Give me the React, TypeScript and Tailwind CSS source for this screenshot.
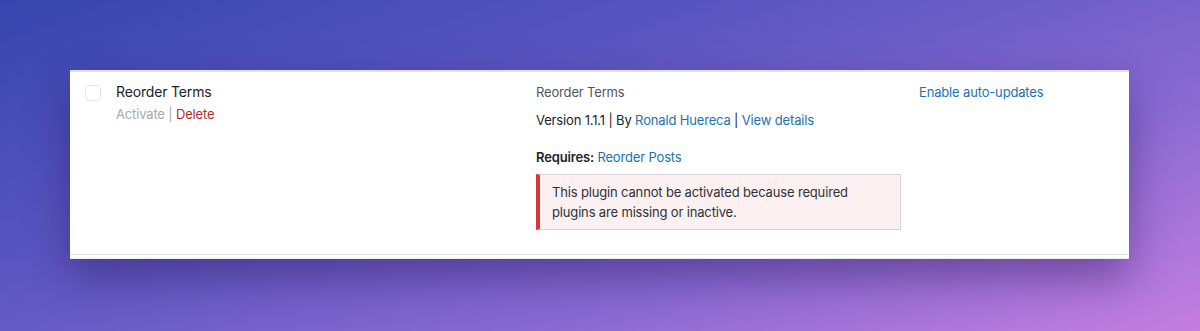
import React from "react";

export default function App() {
  return (
    <div
      className="w-[1200px] h-[331px] overflow-hidden relative bg-[linear-gradient(160deg,#3746ae_0%,#5a55c0_35%,#8a6bd2_70%,#c57ee0_100%)]"
      style={{ fontFamily: "Inter, 'Noto Sans', 'Liberation Sans', sans-serif" }}
    >
      <div className="absolute left-[70px] top-[70px] w-[1059px] bg-white border-t-2 border-[#e2def7] shadow-[0_18px_40px_rgba(40,20,90,0.45)] tracking-[-0.01em]">
        <div className="flex border-b border-[#e4e4e7] pb-[24px]">
          <div className="w-[46px] pl-[15px] pt-[13px]">
            <div className="w-[16px] h-[16px] rounded-[4px] border border-[#e5e5e8] bg-white" />
          </div>
          <div className="w-[420px] pt-[10px]">
            <div className="text-[14px] leading-[20px] text-[#1d2327]">Reorder Terms</div>
            <div className="text-[13px] leading-[18px] mt-[3px]">
              <span className="text-[#a7aaad]">Activate</span>
              <span className="text-[#a7aaad]"> | </span>
              <span className="text-[#b32d2e]">Delete</span>
            </div>
          </div>
          <div className="w-[383px] pt-[10px] text-[13px] text-[#3c434a]">
            <div className="leading-[20px] text-[#50575e]">Reorder Terms</div>
            <div className="leading-[20px] mt-[8px] text-[#1d2327]">
              Version 1.1.1 | By <span className="text-[#2271b1]">Ronald Huereca</span> |{" "}
              <span className="text-[#2271b1]">View details</span>
            </div>
            <div className="leading-[20px] mt-[17px]">
              <span className="font-semibold text-[#1d2327]">Requires:</span>{" "}
              <span className="text-[#2271b1]">Reorder Posts</span>
            </div>
            <div className="mt-[7px] w-[365px] border border-[#d7d5d6] border-l-4 border-l-[#d63638] bg-[#fcf0f1] px-[12px] py-[7px] text-[#2c3338] leading-[20px]">
              This plugin cannot be activated because required plugins are missing or inactive.
            </div>
          </div>
          <div className="flex-1 pt-[10px] text-[13px] leading-[20px] text-[#2271b1]">
            Enable auto-updates
          </div>
        </div>
        <div className="h-[4px] border-b border-[#ececef]" />
      </div>
    </div>
  );
}
